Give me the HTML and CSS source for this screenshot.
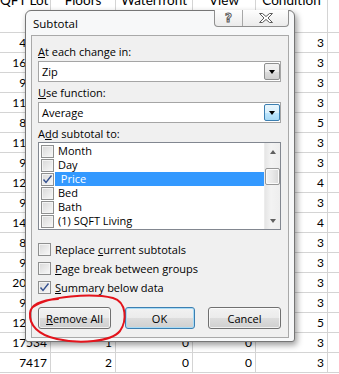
FILE: index.html
```html
<!DOCTYPE html>
<html lang="en">
<head>
    <meta charset="UTF-8">
    <title>Subtotal</title>
    <link rel="stylesheet" href="styles.css">
</head>
<body>
    <table class="sheet">
        <colgroup>
            <col style="width:60px"><col style="width:65px"><col style="width:77px">
            <col style="width:63px"><col style="width:72px"><col style="width:12px">
        </colgroup>
        <tr><th>SQFT Lot</th><th>Floors</th><th>Waterfront</th><th>View</th><th>Condition</th><th></th></tr>
        <tr><td>4520</td><td>2</td><td>0</td><td>0</td><td>3</td><td></td></tr>
        <tr><td>16200</td><td>1</td><td>0</td><td>0</td><td>3</td><td></td></tr>
        <tr><td>9600</td><td>1</td><td>0</td><td>0</td><td>3</td><td></td></tr>
        <tr><td>11200</td><td>2</td><td>0</td><td>0</td><td>3</td><td></td></tr>
        <tr><td>8000</td><td>1</td><td>0</td><td>0</td><td>5</td><td></td></tr>
        <tr><td>11400</td><td>1</td><td>0</td><td>0</td><td>3</td><td></td></tr>
        <tr><td>9500</td><td>2</td><td>0</td><td>0</td><td>3</td><td></td></tr>
        <tr><td>12500</td><td>1</td><td>0</td><td>0</td><td>4</td><td></td></tr>
        <tr><td>9350</td><td>1</td><td>0</td><td>0</td><td>3</td><td></td></tr>
        <tr><td>14100</td><td>2</td><td>0</td><td>0</td><td>4</td><td></td></tr>
        <tr><td>8125</td><td>1</td><td>0</td><td>0</td><td>3</td><td></td></tr>
        <tr><td>9000</td><td>2</td><td>0</td><td>0</td><td>3</td><td></td></tr>
        <tr><td>20100</td><td>1</td><td>0</td><td>0</td><td>3</td><td></td></tr>
        <tr><td>9750</td><td>1</td><td>0</td><td>0</td><td>3</td><td></td></tr>
        <tr><td>12900</td><td>2</td><td>0</td><td>0</td><td>5</td><td></td></tr>
        <tr><td>17534</td><td>1</td><td>0</td><td>0</td><td>3</td><td></td></tr>
        <tr><td>7417</td><td>2</td><td>0</td><td>0</td><td>3</td><td></td></tr>
    </table>

    <div class="dialog">
        <div class="titlebar">
            <span class="title">Subtotal</span>
            <div class="caption-btns">
                <span class="cap-btn help">?</span>
                <span class="cap-btn close">
                    <svg width="14" height="10" viewBox="0 0 14 10"><path d="M0.5 0.5h3l3.5 3 3.5-3h3l-4.5 4.5 4.5 4.5h-3l-3.5-3-3.5 3h-3l4.5-4.5z" fill="#fdfdfd" stroke="#5c5c5c" stroke-width="1"/></svg>
                </span>
            </div>
        </div>

        <div class="client">
            <div class="lbl"><u>A</u>t each change in:</div>
            <div class="combo"><span>Zip</span><span class="drop"><i class="arrow"></i></span></div>

            <div class="lbl"><u>U</u>se function:</div>
            <div class="combo"><span>Average</span><span class="drop hot"><i class="arrow"></i></span></div>

            <div class="lbl">A<u>d</u>d subtotal to:</div>
            <div class="list">
                <div class="items">
                    <div class="item"><span class="cb"></span><span class="txt">Month</span></div>
                    <div class="item"><span class="cb"></span><span class="txt">Day</span></div>
                    <div class="item sel"><span class="cb"><svg width="11" height="11" viewBox="0 0 11 11"><path d="M1.5 5.5l2.5 3 5.5-7" fill="none" stroke="#34508f" stroke-width="1.4"/></svg></span><span class="txt"> Price</span></div>
                    <div class="item"><span class="cb"></span><span class="txt">Bed</span></div>
                    <div class="item"><span class="cb"></span><span class="txt">Bath</span></div>
                    <div class="item"><span class="cb"></span><span class="txt">(1) SQFT Living</span></div>
                </div>
                <div class="scrollbar">
                    <div class="sb-btn"><i class="sb-up"></i></div>
                    <div class="thumb"></div>
                    <div class="sb-btn last"><i class="sb-down"></i></div>
                </div>
            </div>

            <div class="opt first"><span class="cb"></span><span>Replace <u>c</u>urrent subtotals</span></div>
            <div class="opt"><span class="cb"></span><span><u>P</u>age break between groups</span></div>
            <div class="opt"><span class="cb"><svg width="11" height="11" viewBox="0 0 11 11"><path d="M1.5 5.5l2.5 3 5.5-7" fill="none" stroke="#34508f" stroke-width="1.4"/></svg></span><span><u>S</u>ummary below data</span></div>

            <div class="btns">
                <span class="btn"><u>R</u>emove All</span>
                <span class="btn ok">OK</span>
                <span class="btn">Cancel</span>
            </div>
        </div>
    </div>

    <svg class="mark" width="339" height="374" viewBox="0 0 339 374">
        <path d="M33 307C48 296 92 293 113 298C127 302 127 321 120 331C111 342 79 344 57 339C38 335 29 325 30 313C31 304 42 300 58 299" fill="none" stroke="#e3141c" stroke-width="2" stroke-linecap="round"/>
    </svg>
</body>
</html>
```

FILE: styles.css
```css
body {
    margin: 0;
    width: 339px;
    height: 374px;
    overflow: hidden;
    position: relative;
    background-color: #fff;
    font-family: 'Lato', sans-serif;
    color: #000;
}
.sheet {
    border-collapse: collapse;
    table-layout: fixed;
    width: 349px;
    margin: -7px 0 0 -10px;
}
.sheet th {
    height: 38px;
    padding: 0;
    font-weight: normal;
    font-size: 13.5px;
    line-height: 12px;
    vertical-align: top;
    text-align: center;
    white-space: nowrap;
    overflow: hidden;
    border: 1px solid #d4d4d4;
}
.sheet td {
    height: 19px;
    padding: 0 3px;
    font-size: 12px;
    line-height: 19px;
    text-align: right;
    border: 1px solid #d4d4d4;
}
/* Dialog */
.dialog {
    position: absolute;
    left: 25px;
    top: 10px;
    width: 270px;
    height: 332px;
    box-sizing: border-box;
    padding: 0 5px 3px 5px;
    display: flex;
    flex-direction: column;
    background-color: #f7f8f9;
    border: 1px solid #767676;
    border-radius: 6px 6px 3px 3px;
    box-shadow: 2px 3px 6px rgba(0, 0, 0, 0.4);
    font-family: 'Open Sans', sans-serif;
    font-size: 11px;
}
.titlebar {
    position: relative;
    height: 24px;
    display: flex;
    align-items: center;
}
.title {
    padding-left: 2px;
    font-size: 11.5px;
}
.caption-btns {
    position: absolute;
    top: -1px;
    right: 0;
    height: 16px;
    display: flex;
    border: 1px solid #8f8f8f;
    border-top: none;
    border-radius: 0 0 4px 4px;
    background: linear-gradient(#fefefe, #ebebeb);
}
.cap-btn {
    display: flex;
    align-items: center;
    justify-content: center;
}
.help {
    width: 27px;
    border-right: 1px solid #a8a8a8;
    font-family: 'DejaVu Sans', sans-serif;
    font-size: 12px;
    font-weight: bold;
    color: #fdfdfd;
    -webkit-text-stroke: 1px #5c5c5c;
}
.close {
    width: 45px;
}
.client {
    flex: 1;
    padding: 8px 7px 0 6px;
    background-color: #f0f0f0;
    border: 1px solid #a9a9a9;
}
.lbl {
    line-height: 15px;
    margin-top: 3px;
}
.lbl:first-child {
    margin-top: 0;
}
.combo {
    margin-top: 2px;
    height: 21px;
    box-sizing: border-box;
    padding: 0 0 0 3px;
    display: flex;
    align-items: center;
    justify-content: space-between;
    background-color: #fff;
    border: 1px solid #a5a5a5;
}
.drop {
    width: 16px;
    height: 17px;
    box-sizing: border-box;
    display: flex;
    align-items: center;
    justify-content: center;
    border: 1px solid #8e8f8f;
    border-radius: 2px;
    background: linear-gradient(#f2f2f2 0%, #ebebeb 50%, #dddddd 51%, #cfcfcf 100%);
}
.drop.hot {
    border-color: #3c7fb1;
    background: linear-gradient(#eaf6fd 0%, #d9f0fc 50%, #bee6fd 51%, #a7d9f5 100%);
}
.arrow {
    width: 0;
    height: 0;
    border-left: 3.5px solid transparent;
    border-right: 3.5px solid transparent;
    border-top: 4px solid #000;
}
.list {
    margin-top: 1px;
    height: 88px;
    box-sizing: border-box;
    display: flex;
    background-color: #fff;
    border: 1px solid #828790;
}
.items {
    flex: 1;
    padding-top: 1px;
}
.item {
    height: 14px;
    display: flex;
    align-items: center;
}
.item .cb {
    margin-left: 2px;
}
.item .txt {
    flex: 1;
    height: 14px;
    line-height: 14px;
    margin-left: 1px;
    padding-left: 3px;
    white-space: pre;
}
.item.sel .txt {
    background-color: #3399ff;
    color: #fff;
}
.cb {
    width: 13px;
    height: 13px;
    box-sizing: border-box;
    display: flex;
    align-items: center;
    justify-content: center;
    border: 1px solid #8e8f8f;
    background: linear-gradient(135deg, #d8d8d8, #f9f9f9);
    box-shadow: inset 0 0 0 1px #f4f4f4;
    flex-shrink: 0;
}
.scrollbar {
    width: 16px;
    display: flex;
    flex-direction: column;
    background: linear-gradient(to right, #e6e6e6, #f3f3f3 40%, #eeeeee);
    border-left: 1px solid #ececec;
    box-sizing: border-box;
}
.sb-btn {
    height: 17px;
    display: flex;
    align-items: center;
    justify-content: center;
}
.sb-btn.last {
    margin-top: auto;
}
.sb-up, .sb-down {
    width: 0;
    height: 0;
    border-left: 3.5px solid transparent;
    border-right: 3.5px solid transparent;
}
.sb-up {
    border-bottom: 4px solid #606060;
}
.sb-down {
    border-top: 4px solid #606060;
}
.thumb {
    margin-top: 8px;
    height: 15px;
    border: 1px solid #979797;
    border-radius: 2px;
    background: linear-gradient(to right, #f4f4f4, #e8e8e8 50%, #d8d8d8);
    box-shadow: inset 0 0 0 1px #fbfbfb;
}
.opt {
    height: 19px;
    display: flex;
    align-items: center;
    gap: 4px;
}
.opt.first {
    margin-top: 10px;
}
.btns {
    margin-top: 10px;
    display: flex;
    justify-content: space-between;
}
.btn {
    width: 73px;
    height: 22px;
    box-sizing: border-box;
    display: flex;
    align-items: center;
    justify-content: center;
    border: 1px solid #707070;
    border-radius: 3px;
    background: linear-gradient(#f2f2f2 0%, #ebebeb 50%, #dddddd 51%, #cfcfcf 100%);
    box-shadow: inset 0 0 0 1px rgba(255, 255, 255, 0.7);
}
.btn.ok {
    width: 70px;
    border-color: #3c7fb1;
    box-shadow: inset 0 0 0 1px #a8dbf6;
}
.mark {
    position: absolute;
    left: 0;
    top: 0;
    pointer-events: none;
}
```
